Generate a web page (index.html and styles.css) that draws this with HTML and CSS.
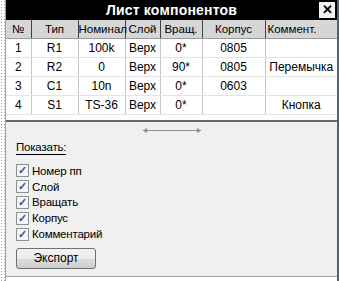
FILE: index.html
```html
<!DOCTYPE html>
<html lang="ru">
<head>
  <meta charset="UTF-8">
  <title>Лист компонентов</title>
  <link rel="stylesheet" href="styles.css">
</head>
<body>
  <div class="window">
    <div class="dots"></div>
    <div class="panel">
      <div class="title">
        Лист компонентов
        <span class="close">&#10005;</span>
      </div>
      <div class="grid">
        <table>
          <colgroup>
            <col style="width:25px">
            <col style="width:47px">
            <col style="width:47px">
            <col style="width:35px">
            <col style="width:42px">
            <col style="width:63px">
            <col>
          </colgroup>
          <thead>
            <tr>
              <th>№</th><th>Тип</th><th>Номинал</th><th>Слой</th><th>Вращ.</th><th>Корпус</th><th>Коммент.</th>
            </tr>
          </thead>
          <tbody>
            <tr><td>1</td><td>R1</td><td>100k</td><td>Верх</td><td>0*</td><td>0805</td><td></td></tr>
            <tr><td>2</td><td>R2</td><td>0</td><td>Верх</td><td>90*</td><td>0805</td><td>Перемычка</td></tr>
            <tr><td>3</td><td>C1</td><td>10n</td><td>Верх</td><td>0*</td><td>0603</td><td></td></tr>
            <tr><td>4</td><td>S1</td><td>TS-36</td><td>Верх</td><td>0*</td><td></td><td>Кнопка</td></tr>
          </tbody>
        </table>
      </div>
      <div class="options">
        <div class="splitter">
          <svg width="60" height="7" viewBox="0 0 60 7">
            <path d="M1 3.5H59" stroke="#8c8c8c" stroke-width="1"/>
            <path d="M1 3.5L5 1V6Z M59 3.5L55 1V6Z" fill="#8c8c8c"/>
          </svg>
        </div>
        <div class="caption">Показать:</div>
        <label class="check"><span class="box">&#10003;</span>Номер пп</label>
        <label class="check"><span class="box">&#10003;</span>Слой</label>
        <label class="check"><span class="box">&#10003;</span>Вращать</label>
        <label class="check"><span class="box">&#10003;</span>Корпус</label>
        <label class="check"><span class="box">&#10003;</span>Комментарий</label>
        <button class="export">Экспорт</button>
      </div>
    </div>
  </div>
</body>
</html>
```

FILE: styles.css
```css
body {
  margin: 0;
  background-color: #fff;
  font-family: "Liberation Sans", Arial, sans-serif;
}
.window {
  display: flex;
  height: 281px;
}
.dots {
  width: 5px;
  background-image: radial-gradient(#a8a8a8 0.8px, transparent 0.9px);
  background-size: 3px 3px;
}
.panel {
  flex: 1;
  display: flex;
  flex-direction: column;
  border-left: 1px solid #a0a0a0;
  border-right: 2px solid #56626c;
  padding-bottom: 4px;
}
.title {
  position: relative;
  height: 20px;
  line-height: 20px;
  background-color: #000;
  color: #fff;
  font-size: 14px;
  font-weight: bold;
  letter-spacing: 0.2px;
  text-align: center;
}
.close {
  position: absolute;
  right: 2px;
  top: 2px;
  width: 16px;
  height: 16px;
  line-height: 16px;
  background-color: #f0f0f0;
  color: #000;
  font-size: 13px;
  letter-spacing: 0;
}
.grid {
  height: 100px;
  background-color: #fff;
  border-bottom: 2px solid #6a6a6a;
}
table {
  width: 100%;
  border-collapse: collapse;
  table-layout: fixed;
  font-size: 12px;
}
th {
  height: 18px;
  padding: 0;
  background-color: #d6d6d6;
  border-right: 1px solid #404040;
  border-bottom: 1px solid #9a9a9a;
  font-size: 11.5px;
  font-weight: normal;
  color: #000;
  white-space: nowrap;
}
th:last-child {
  border-right: none;
  text-align: left;
  padding-left: 2px;
}
td {
  height: 18px;
  padding: 0;
  text-align: center;
  border-right: 1px solid #c8c8c8;
  border-bottom: 1px solid #e4e4e4;
  white-space: nowrap;
}
td:last-child {
  border-right: none;
}
.options {
  flex: 1;
  background-color: #f0f0f0;
  border-bottom: 1px solid #a0a0a0;
  padding: 0 10px;
  font-size: 11.5px;
  letter-spacing: -0.2px;
}
.splitter {
  display: flex;
  justify-content: center;
  padding-top: 5px;
  height: 10px;
}
.caption {
  display: inline-block;
  margin-top: 3px;
  margin-bottom: 8px;
  border-bottom: 1px solid #000;
  line-height: 14px;
}
.check {
  display: flex;
  align-items: center;
  height: 15.8px;
}
.box {
  width: 11px;
  height: 11px;
  margin-right: 3px;
  border: 1px solid #8e8f8f;
  background-color: #f4f4f4;
  color: #3a5aa8;
  font-size: 11px;
  font-weight: bold;
  line-height: 11px;
  text-align: center;
  letter-spacing: 0;
}
.export {
  margin-top: 6px;
  width: 80px;
  height: 21px;
  border: 1px solid #707070;
  border-radius: 3px;
  background: linear-gradient(#f2f2f2, #ebebeb 50%, #dddddd 50%, #cfcfcf);
  font-family: "Liberation Sans", Arial, sans-serif;
  font-size: 12px;
  color: #000;
}
```
